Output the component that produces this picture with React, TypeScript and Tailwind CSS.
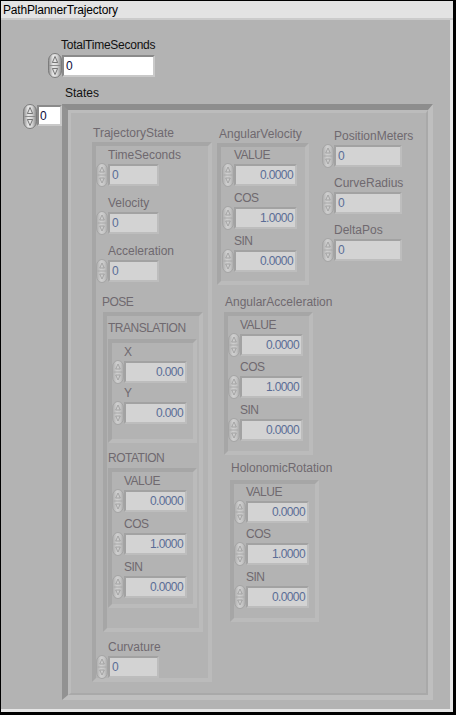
import React from "react";

const LBL = "h-[14px] leading-[17px] text-[12px] whitespace-nowrap text-[#6f696f]";

function Spin({ on = false }: { on?: boolean }) {
  if (on) {
    return (
      <svg width="14" height="25" viewBox="0 0 14 25" className="block shrink-0">
        <rect x="0.5" y="0.5" width="13" height="24" rx="6.5" ry="7" fill="url(#spinOn)" stroke="#7b7b7b" />
        <line x1="1.5" y1="12.5" x2="12.5" y2="12.5" stroke="#8c8c8c" />
        <path d="M7 3.5 L9.6 9.5 L4.4 9.5 Z" fill="#e2e2e2" stroke="#5a5a5a" strokeWidth="0.8" strokeLinejoin="round" />
        <path d="M4.4 15.5 L9.6 15.5 L7 21.5 Z" fill="#e2e2e2" stroke="#5a5a5a" strokeWidth="0.8" strokeLinejoin="round" />
      </svg>
    );
  }
  return (
    <svg width="12" height="24" viewBox="0 0 12 24" className="block shrink-0">
      <rect x="0.5" y="0.5" width="11" height="23" rx="5.5" ry="6.5" fill="url(#spinOff)" stroke="#a4a4a4" />
      <line x1="1.5" y1="12" x2="10.5" y2="12" stroke="#a8a8a8" />
      <path d="M6 4 L8.3 9 L3.7 9 Z" fill="none" stroke="#9a9a9a" strokeWidth="0.8" strokeLinejoin="round" />
      <path d="M3.7 15 L8.3 15 L6 20 Z" fill="none" stroke="#9a9a9a" strokeWidth="0.8" strokeLinejoin="round" />
    </svg>
  );
}

function Ctl({
  label,
  value,
  box,
  right = false,
  caps = false,
  className = "",
}: {
  label: string;
  value: string;
  box: string;
  right?: boolean;
  caps?: boolean;
  className?: string;
}) {
  return (
    <div className={`flex flex-col ${className}`}>
      <div className={`${LBL} pl-[12px] ${caps ? "tracking-[-0.5px]" : ""}`}>{label}</div>
      <div className="mt-[2px] flex h-[24px] items-center">
        <Spin />
        <div
          className={`${box} h-[22px] shrink-0 border-2 border-t-[#a2a2a2] border-l-[#a2a2a2] border-r-[#bdbdbd] border-b-[#bdbdbd] bg-[#d3d3d3] flex items-center text-[12px] leading-none tracking-[-0.6px] text-[#5a6d96] ${
            right ? "justify-end pr-[2px]" : "pl-[2px]"
          }`}
        >
          {value}
        </div>
      </div>
    </div>
  );
}

function Frame({ className = "", children }: { className?: string; children: React.ReactNode }) {
  return (
    <div
      className={`flex shrink-0 flex-col border-4 border-t-[#a6a6a6] border-l-[#a6a6a6] border-r-[#bbbbbb] border-b-[#bbbbbb] ${className}`}
    >
      {children}
    </div>
  );
}

function Trig({ className = "" }: { className?: string }) {
  return <Ctl label="VALUE" value="0.0000" box="w-[63px]" right caps className={className} />;
}

export default function App() {
  return (
    <div className="flex h-[715px] w-[456px] flex-col bg-black pb-[3px] pl-[1px] pr-[3px] pt-[1px] font-['Liberation_Sans',Arial,sans-serif]">
      <svg className="absolute h-0 w-0" aria-hidden="true">
        <defs>
          <linearGradient id="spinOn" x1="0" y1="0" x2="1" y2="0">
            <stop offset="0" stopColor="#8d8d8d" />
            <stop offset="0.35" stopColor="#e8e8e8" />
            <stop offset="0.65" stopColor="#d6d6d6" />
            <stop offset="1" stopColor="#888888" />
          </linearGradient>
          <linearGradient id="spinOff" x1="0" y1="0" x2="1" y2="0">
            <stop offset="0" stopColor="#acacac" />
            <stop offset="0.4" stopColor="#d0d0d0" />
            <stop offset="0.7" stopColor="#c6c6c6" />
            <stop offset="1" stopColor="#a9a9a9" />
          </linearGradient>
        </defs>
      </svg>

      <div className="h-[17px] shrink-0 bg-[#e3e3e3] pl-[2px] text-[12px] leading-[18px] tracking-[-0.2px] text-black">
        PathPlannerTrajectory
      </div>
      <div className="h-[2px] shrink-0 bg-[#cbcbcb]" />

      <div className="flex min-h-0 flex-1 flex-col bg-[#e6e6e6] pb-[3px] pr-[3px]">
        <div className="flex min-h-0 flex-1 flex-col bg-[#b3b3b3]">
          {/* TotalTimeSeconds */}
          <div className="ml-[60px] mt-[17px] h-[14px] text-[12px] leading-[17px] tracking-[-0.25px] text-[#111]">
            TotalTimeSeconds
          </div>
          <div className="ml-[47px] mt-[2px] flex items-start">
            <Spin on />
            <div className="mt-[2px] flex h-[22px] w-[93px] items-center border-2 border-t-[#8a8a8a] border-l-[#8a8a8a] border-r-[#c9c9c9] border-b-[#c9c9c9] bg-white pl-[2px] text-[12px] leading-none text-[#0b0b3b]">
              0
            </div>
          </div>

          {/* States */}
          <div className="ml-[64px] mt-[7px] h-[14px] text-[12px] leading-[17px] text-[#111]">States</div>
          <div className="ml-[22px] mt-[5px] flex items-start">
            <Spin on />
            <div className="mt-[1px] flex h-[21px] w-[25px] items-center border-2 border-t-[#8a8a8a] border-l-[#8a8a8a] border-r-[#c9c9c9] border-b-[#c9c9c9] bg-white pl-[1px] text-[12px] leading-none text-[#0b0b3b]">
              0
            </div>

            {/* Array frame */}
            <div className="h-[596px] w-[371px] shrink-0 border-b-[5px] border-l-[6px] border-r-[5px] border-t-[6px] border-b-[#bfbfbf] border-l-[#929292] border-r-[#bfbfbf] border-t-[#8d8d8d]">
              <div className="flex h-full w-full items-start border-b-[2px] border-l-[3px] border-r-[2px] border-t-[3px] border-b-[#a9a9a9] border-l-[#bcbcbc] border-r-[#a9a9a9] border-t-[#bcbcbc]">
                {/* Column 1: TrajectoryState */}
                <div className="ml-[21px] flex w-[120px] shrink-0 flex-col">
                  <div className={`${LBL} ml-[1px] mt-[12px]`}>TrajectoryState</div>
                  <Frame className="mt-[3px] h-[540px] w-[120px]">
                    <Ctl label="TimeSeconds" value="0" box="w-[51px]" className="mt-[1px]" />
                    <Ctl label="Velocity" value="0" box="w-[51px]" className="mt-[8px]" />
                    <Ctl label="Acceleration" value="0" box="w-[51px]" className="mt-[8px]" />
                    <div className={`${LBL} ml-[6px] mt-[11px] tracking-[-0.5px]`}>POSE</div>
                    <Frame className="ml-[7px] mt-[4px] h-[320px] w-[100px]">
                      <div className={`${LBL} ml-[1px] mt-[4px] tracking-[-0.5px]`}>TRANSLATION</div>
                      <Frame className="ml-[1px] mt-[5px] h-[104px] w-[89px]">
                        <Ctl label="X" value="0.000" box="w-[63px]" right caps className="mt-[1px]" />
                        <Ctl label="Y" value="0.000" box="w-[63px]" right caps className="mt-[1px]" />
                      </Frame>
                      <div className={`${LBL} ml-[1px] mt-[7px] tracking-[-0.5px]`}>ROTATION</div>
                      <Frame className="ml-[1px] mt-[4px] h-[140px] w-[89px]">
                        <Trig className="mt-[1px]" />
                        <Ctl label="COS" value="1.0000" box="w-[63px]" right caps className="mt-[3px]" />
                        <Ctl label="SIN" value="0.0000" box="w-[63px]" right caps className="mt-[3px]" />
                      </Frame>
                    </Frame>
                    <Ctl label="Curvature" value="0" box="w-[51px]" className="mt-[7px]" />
                  </Frame>
                </div>

                {/* Column 2 */}
                <div className="ml-[5px] flex w-[102px] shrink-0 flex-col">
                  <div className={`${LBL} ml-[2px] mt-[13px]`}>AngularVelocity</div>
                  <Frame className="mt-[3px] h-[142px] w-[92px]">
                    <Trig className="ml-[1px]" />
                    <Ctl label="COS" value="1.0000" box="w-[63px]" right caps className="ml-[1px] mt-[3px]" />
                    <Ctl label="SIN" value="0.0000" box="w-[63px]" right caps className="ml-[1px] mt-[3px]" />
                  </Frame>

                  <div className={`${LBL} ml-[8px] mt-[9px]`}>AngularAcceleration</div>
                  <Frame className="ml-[7px] mt-[4px] h-[143px] w-[89px]">
                    <Trig className="mt-[1px]" />
                    <Ctl label="COS" value="1.0000" box="w-[63px]" right caps className="mt-[2px]" />
                    <Ctl label="SIN" value="0.0000" box="w-[63px]" right caps className="mt-[3px]" />
                  </Frame>

                  <div className={`${LBL} ml-[14px] mt-[5px]`}>HolonomicRotation</div>
                  <Frame className="ml-[13px] mt-[6px] h-[142px] w-[89px]">
                    <Trig />
                    <Ctl label="COS" value="1.0000" box="w-[63px]" right caps className="mt-[2px]" />
                    <Ctl label="SIN" value="0.0000" box="w-[63px]" right caps className="mt-[3px]" />
                  </Frame>
                </div>

                {/* Column 3 */}
                <div className="ml-[3px] flex shrink-0 flex-col">
                  <Ctl label="PositionMeters" value="0" box="w-[68px]" className="mt-[15px]" />
                  <Ctl label="CurveRadius" value="0" box="w-[68px]" className="mt-[7px]" />
                  <Ctl label="DeltaPos" value="0" box="w-[68px]" className="mt-[7px]" />
                </div>
              </div>
            </div>
          </div>
        </div>
      </div>
    </div>
  );
}
